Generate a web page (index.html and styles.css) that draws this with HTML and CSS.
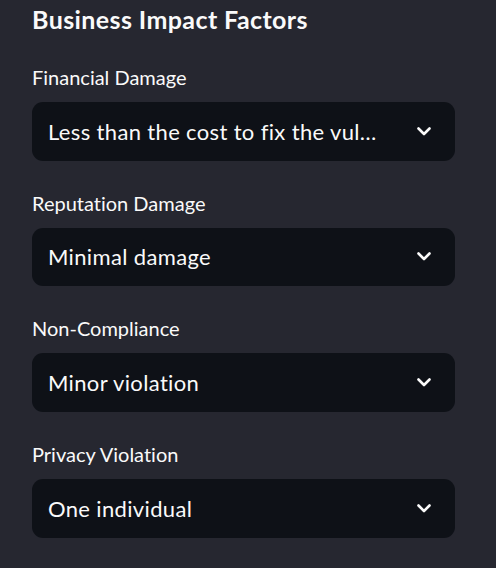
FILE: index.html
```html
<!DOCTYPE html>
<html>
<head>
<meta charset="utf-8">
<link rel="stylesheet" href="styles.css">
</head>
<body>
<div class="panel">
  <h2 class="title">Business Impact Factors</h2>
  <div class="fields">
    <div class="field">
      <label class="label">Financial Damage</label>
      <div class="select">
        <span class="value">Less than the cost to fix the vul…</span>
        <svg class="chev" width="14" height="9" viewBox="0 0 14 9"><path d="M1.5 1.5 L7 7 L12.5 1.5" fill="none" stroke="#fafafa" stroke-width="2.6" stroke-linecap="round" stroke-linejoin="round"/></svg>
      </div>
    </div>
    <div class="field">
      <label class="label">Reputation Damage</label>
      <div class="select">
        <span class="value">Minimal damage</span>
        <svg class="chev" width="14" height="9" viewBox="0 0 14 9"><path d="M1.5 1.5 L7 7 L12.5 1.5" fill="none" stroke="#fafafa" stroke-width="2.6" stroke-linecap="round" stroke-linejoin="round"/></svg>
      </div>
    </div>
    <div class="field">
      <label class="label">Non-Compliance</label>
      <div class="select">
        <span class="value">Minor violation</span>
        <svg class="chev" width="14" height="9" viewBox="0 0 14 9"><path d="M1.5 1.5 L7 7 L12.5 1.5" fill="none" stroke="#fafafa" stroke-width="2.6" stroke-linecap="round" stroke-linejoin="round"/></svg>
      </div>
    </div>
    <div class="field">
      <label class="label">Privacy Violation</label>
      <div class="select">
        <span class="value">One individual</span>
        <svg class="chev" width="14" height="9" viewBox="0 0 14 9"><path d="M1.5 1.5 L7 7 L12.5 1.5" fill="none" stroke="#fafafa" stroke-width="2.6" stroke-linecap="round" stroke-linejoin="round"/></svg>
      </div>
    </div>
  </div>
</div>
</body>
</html>
```
FILE: styles.css
```css
html, body {
  margin: 0;
  padding: 0;
  background: #262730;
}
body {
  font-family: Lato, "Open Sans", sans-serif;
  font-variant-ligatures: none;
  color: #fafafa;
  width: 496px;
  height: 568px;
  overflow: hidden;
}
.panel {
  padding: 0 41px 0 32px;
}
.title {
  margin: 0;
  font-size: 25px;
  letter-spacing: 0.4px;
  font-weight: 700;
  line-height: 39px;
}
.fields {
  margin-top: 24px;
  display: flex;
  flex-direction: column;
  gap: 27.8px;
}
.field {
  display: flex;
  flex-direction: column;
  gap: 11px;
}
.label {
  font-size: 20px;
  line-height: 28px;
  height: 28px;
}
.select {
  height: 58.8px;
  box-sizing: border-box;
  background: #0e1117;
  border-radius: 11px;
  display: flex;
  align-items: center;
  padding: 0 24px 0 16px;
}
.value {
  flex: 1;
  min-width: 0;
  font-size: 22px;
  letter-spacing: 0.35px;
  white-space: nowrap;
  overflow: hidden;
  text-overflow: ellipsis;
}
.chev {
  flex: none;
  display: block;
}
```
